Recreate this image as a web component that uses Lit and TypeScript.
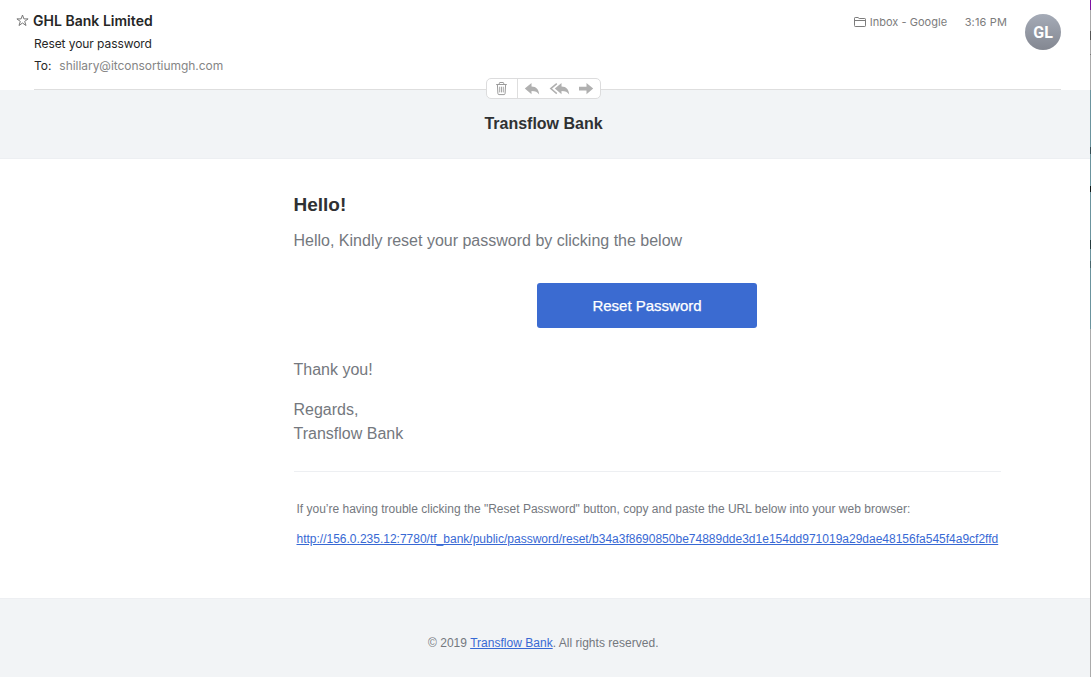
import { LitElement, html, css } from "lit";
import { customElement } from "lit/decorators.js";

@customElement("mail-toolbar")
class MailToolbar extends LitElement {
  static styles = css`
    :host { display: flex; box-sizing: border-box; width: 115px; height: 21px; border: 1px solid #dcdcdd; border-radius: 5px; background: #fff; }
    svg { display: block; }
  `;
  render() {
    return html`<svg width="113" height="19" viewBox="487 79 113 19" fill="none">
      <path d="M517.5 79V98" stroke="#dedede"/>
      <g stroke="#9c9c9c" stroke-width="1" stroke-linejoin="round">
        <path d="M496.2 84.5H506.8M499.3 84.3V83.2Q499.3 82.5 500 82.5H503Q503.7 82.5 503.7 83.2V84.3M497.4 84.8L497.9 93.5Q498 94.6 499 94.6H504Q505 94.6 505.1 93.5L505.6 84.8"/>
        <path d="M499.7 86.7V92.4M501.5 86.7V92.4M503.3 86.7V92.4" stroke-width=".9"/>
      </g>
      <g fill="#b0b0b0">
        <path d="M524.8 88.6L531.5 83V86.4C536.4 86.4 538.8 89.5 539.2 94.5C537.6 91.9 535.3 90.9 531.5 90.9V94.2Z"/>
        <path d="M554.8 88.6L561.5 83V86.4C566.4 86.4 568.8 89.5 569.2 94.5C567.6 91.9 565.3 90.9 561.5 90.9V94.2Z"/>
        <path d="M593.2 88.6L586.5 83V86.7H579V90.4H586.5V94.3Z"/>
      </g>
      <path d="M556.8 83.6L550.8 88.6L556.8 93.6" stroke="#b0b0b0" stroke-width="1.5"/>
    </svg>`;
  }
}

@customElement("app-root")
class AppRoot extends LitElement {
  static styles = css`
    :host { display: grid; grid-template-columns: 1090px 1px; width: 1091px; height: 677px; overflow: hidden; background: #fff; font-family: "Liberation Sans", Arial, sans-serif; color: #74787e; }
    * { box-sizing: border-box; }
    .page { display: flex; flex-direction: column; min-width: 0; white-space: nowrap; }
    .head { position: relative; height: 90px; padding: 10px 29px 0 16px; display: flex; justify-content: space-between; font-family: Inter, sans-serif; color: #262626; }
    .row { display: flex; align-items: center; height: 22px; }
    .title { height: 21px; }
    .star { width: 13px; height: 13px; margin-right: 4px; }
    .from { font-size: 14px; font-weight: 600; letter-spacing: .02px; }
    .sub { padding-left: 18px; font-size: 12px; }
    .subject { height: 24px; letter-spacing: -.07px; }
    .to { height: 20px; letter-spacing: -.04px; }
    .addr { color: #858585; margin-left: 8px; }
    .meta { display: flex; font-size: 11px; color: #7c7c7c; }
    .where { height: 24px; }
    .folder { margin-right: 4px; }
    .inbox { letter-spacing: .03px; }
    .time { margin-left: 17.5px; letter-spacing: .15px; }
    .avatar { width: 36px; height: 36px; margin: 4px 0 0 18px; border-radius: 50%; background: linear-gradient(#a5abb7, #838791); color: #fff; display: flex; align-items: center; justify-content: center; font: 700 16px Roboto, sans-serif; }
    .rule { position: absolute; left: 34px; right: 29px; bottom: 0; height: 1px; background: #dedede; }
    mail-toolbar { position: absolute; left: 486px; top: 78px; z-index: 1; }
    .brand { height: 69px; background: #f2f4f6; border-bottom: 1px solid #edeff2; text-align: center; padding: 23px 3px 0 0; font-size: 16px; line-height: 22px; font-weight: 700; color: #2f3133; }
    .body { height: 439px; padding: 34px 89.5px 0 293.5px; font-size: 16px; line-height: 24px; }
    .body > div { height: 24px; }
    .body .hello { font-size: 19px; font-weight: 700; color: #2f3133; margin-bottom: 12px; }
    .body .button { margin: 30px auto 30px 243.5px; width: 220px; height: 45px; border-radius: 3px; background: #3b6bd1; color: #fff; text-align: center; font-size: 15px; line-height: 45px; -webkit-text-stroke: .25px #fff; }
    .body .gap { margin-bottom: 16px; }
    .body .help { margin-top: 25px; border-top: 1px solid #edeff2; height: 90px; padding: 28px 0 0 3px; font-size: 12px; line-height: 18px; }
    .url { margin-top: 12px; }
    a { color: #3869d4; text-decoration: underline; }
    .foot { height: 79px; border-top: 1px solid #edeff2; background: #f2f4f6; padding: 35px 3.5px 0 0; text-align: center; font-size: 12px; line-height: 18px; letter-spacing: .02px; }
    .edge { background: linear-gradient(#7d12a2 0 10px, #aaa 10px 31px, #555 31px 40px, #aaa 40px 54px, #777 54px 55px, #aaa 55px 90px, #6b949e 90px 147px, #344d54 147px 154px, #6b949e 154px 186px, #101818 186px 192px, #6b949e 192px 240px, #263c40 240px 249px, #6b949e 249px 261px, #48666d 261px 268px, #6b949e 268px 329px, #ababab 329px); }
  `;
  render() {
    return html`
      <div class="page">
        <header class="head">
          <div>
            <div class="row title">
              <svg class="star" viewBox="0 0 13 13" fill="none" stroke="#777" stroke-width="1"><path d="M6.5 1L7.9 4.9H12.1L8.7 7.4L10 11.5L6.5 9L3 11.5L4.3 7.4L.9 4.9H5.1Z"/></svg>
              <span class="from">GHL Bank Limited</span>
            </div>
            <div class="row sub subject"><span>Reset your password</span></div>
            <div class="row sub to"><span>To:</span><span class="addr">shillary@itconsortiumgh.com</span></div>
          </div>
          <div class="meta">
            <div class="row where">
              <svg class="folder" width="12" height="12" viewBox="0 0 12 12" fill="none" stroke="#7c7c7c"><path d="M.5 9.5V2.2Q.5 1.5 1.2 1.5H4L5.2 2.5H10.8Q11.5 2.5 11.5 3.2V9.8Q11.5 10.5 10.8 10.5H1.2Q.5 10.5 .5 9.8ZM.5 4.5H11.5"/></svg>
              <span class="inbox">Inbox - Google</span><span class="time">3:16 PM</span>
            </div>
            <div class="avatar">GL</div>
          </div>
          <div class="rule"></div>
          <mail-toolbar></mail-toolbar>
        </header>
        <div class="brand">Transflow Bank</div>
        <main class="body">
          <div class="hello">Hello!</div>
          <div>Hello, Kindly reset your password by clicking the below</div>
          <div class="button">Reset Password</div>
          <div class="gap">Thank you!</div>
          <div>Regards,</div>
          <div>Transflow Bank</div>
          <div class="help">
            <div>If you’re having trouble clicking the "Reset Password" button, copy and paste the URL below into your web browser:</div>
            <div class="url"><a>http://156.0.235.12:7780/tf_bank/public/password/reset/b34a3f8690850be74889dde3d1e154dd971019a29dae48156fa545f4a9cf2ffd</a></div>
          </div>
        </main>
        <footer class="foot">© 2019 <a>Transflow Bank</a>. All rights reserved.</footer>
      </div>
      <div class="edge"></div>`;
  }
}
